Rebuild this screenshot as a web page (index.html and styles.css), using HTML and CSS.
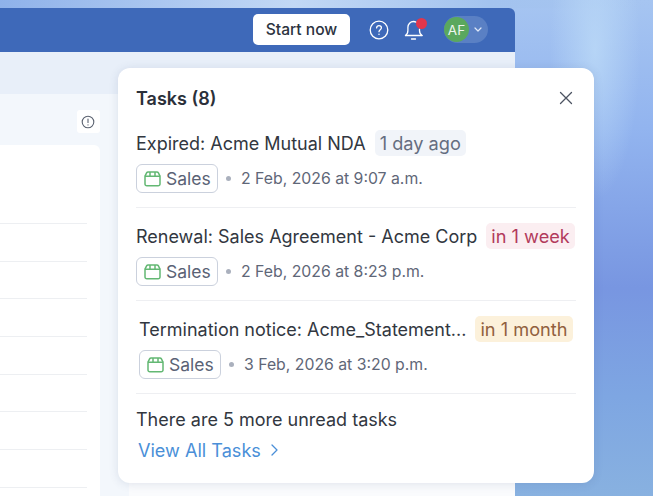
FILE: index.html
```html
<!DOCTYPE html>
<html lang="en">
<head>
    <meta charset="UTF-8">
    <meta name="viewport" content="width=device-width, initial-scale=1.0">
    <title>Tasks</title>
    <link rel="stylesheet" href="styles.css">
</head>
<body>

    <div class="app">
        <div class="topbar">
            <button class="start-btn">Start now</button>
            <svg class="help-icon" width="20" height="20" viewBox="0 0 20 20" fill="none" stroke="#fff" stroke-width="1.3" stroke-linecap="round">
                <circle cx="10" cy="10" r="8.8"/>
                <path d="M7.6 7.9c0-1.4 1.1-2.3 2.4-2.3s2.4.9 2.4 2.2c0 1.9-2.4 1.9-2.4 3.9"/>
                <path d="M10 14.2v.2"/>
            </svg>
            <div class="bell">
                <svg width="20" height="22" viewBox="0 0 20 22" fill="none" stroke="#fff" stroke-width="1.3" stroke-linecap="round" stroke-linejoin="round">
                    <path d="M1.5 16.5c1.6-1 2.4-2.6 2.4-5V8.2c0-3.1 2.500-5.700 5.600-5.700 1 0 2 .3 2.800.8"/>
                    <path d="M15.500 10v1.500c0 2.400.9 4 2.500 5"/>
                    <path d="M1.500 16.500H18"/>
                    <path d="M7.500 20h4"/>
                </svg>
                <span class="bell-dot"></span>
            </div>
            <div class="account">
                <span class="avatar">AF</span>
                <svg width="8" height="5" viewBox="0 0 8 5" fill="none" stroke="#dfe8f8" stroke-width="1.2" stroke-linecap="round" stroke-linejoin="round">
                    <path d="M1 1l3 3 3-3"/>
                </svg>
            </div>
        </div>
        <div class="subbar"></div>
        <div class="content">
            <div class="toolbar">
                <span class="info-btn">
                    <svg width="14" height="14" viewBox="0 0 14 14" fill="none" stroke="#5b6270" stroke-width="1.1" stroke-linecap="round">
                        <circle cx="7" cy="7" r="5.8"/>
                        <path d="M7 4v3.4"/>
                        <path d="M7 9.8v.1"/>
                    </svg>
                </span>
            </div>
            <div class="panels">
                <div class="list-card">
                    <div class="list-head"></div>
                    <div class="list-row"></div>
                    <div class="list-row"></div>
                    <div class="list-row"></div>
                    <div class="list-row"></div>
                    <div class="list-row"></div>
                    <div class="list-row"></div>
                    <div class="list-row"></div>
                    <div class="list-row"></div>
                </div>
                <div class="main-card"></div>
            </div>
        </div>
    </div>

    <div class="tasks-popover">
        <div class="tasks-header">
            <h2>Tasks (8)</h2>
            <svg width="14" height="14" viewBox="0 0 14 14" fill="none" stroke="#4c5361" stroke-width="1.3" stroke-linecap="round">
                <path d="M1.5 1.5l11 11M12.5 1.5l-11 11"/>
            </svg>
        </div>

        <div class="task">
            <div class="task-title">
                <span class="task-name">Expired: Acme Mutual NDA</span>
                <span class="badge badge-grey">1 day ago</span>
            </div>
            <div class="task-meta">
                <span class="chip">
                    <svg class="chip-icon" width="17" height="17" viewBox="0 0 17 17" fill="none" stroke="#63b873" stroke-width="1.5" stroke-linejoin="round">
                        <path d="M1 6.2V14a1.8 1.8 0 0 0 1.8 1.8h11.400A1.800 1.800 0 0 0 16 14V6.200z"/>
                        <path d="M1 6.200l1.600-3.300c.3-.6.8-1 1.500-1h8.800c.7 0 1.200.4 1.500 1L16 6.200"/>
                        <path d="M6 6.200V1.900M11 6.200V1.900"/>
                    </svg>
                    Sales
                </span>
                <span class="dot"></span>
                <span class="task-date">2 Feb, 2026 at 9:07 a.m.</span>
            </div>
        </div>

        <div class="task">
            <div class="task-title">
                <span class="task-name">Renewal: Sales Agreement - Acme Corp</span>
                <span class="badge badge-red">in 1 week</span>
            </div>
            <div class="task-meta">
                <span class="chip">
                    <svg class="chip-icon" width="17" height="17" viewBox="0 0 17 17" fill="none" stroke="#63b873" stroke-width="1.5" stroke-linejoin="round">
                        <path d="M1 6.200V14a1.800 1.800 0 0 0 1.800 1.800h11.400A1.800 1.800 0 0 0 16 14V6.200z"/>
                        <path d="M1 6.200l1.600-3.300c.3-.6.8-1 1.500-1h8.800c.7 0 1.200.4 1.500 1L16 6.200"/>
                        <path d="M6 6.200V1.900M11 6.200V1.900"/>
                    </svg>
                    Sales
                </span>
                <span class="dot"></span>
                <span class="task-date">2 Feb, 2026 at 8:23 p.m.</span>
            </div>
        </div>

        <div class="task task-shifted">
            <div class="task-title">
                <span class="task-name">Termination notice: Acme_Statement...</span>
                <span class="badge badge-amber">in 1 month</span>
            </div>
            <div class="task-meta">
                <span class="chip">
                    <svg class="chip-icon" width="17" height="17" viewBox="0 0 17 17" fill="none" stroke="#63b873" stroke-width="1.5" stroke-linejoin="round">
                        <path d="M1 6.200V14a1.800 1.800 0 0 0 1.800 1.800h11.400A1.800 1.800 0 0 0 16 14V6.200z"/>
                        <path d="M1 6.200l1.600-3.300c.3-.6.8-1 1.500-1h8.800c.7 0 1.200.4 1.500 1L16 6.200"/>
                        <path d="M6 6.200V1.900M11 6.200V1.900"/>
                    </svg>
                    Sales
                </span>
                <span class="dot"></span>
                <span class="task-date">3 Feb, 2026 at 3:20 p.m.</span>
            </div>
        </div>

        <div class="tasks-footer">
            <p>There are 5 more unread tasks</p>
            <a class="view-all" href="#">
                View All Tasks
                <svg width="7" height="12" viewBox="0 0 7 12" fill="none" stroke="#4a8fd8" stroke-width="1.3" stroke-linecap="round" stroke-linejoin="round">
                    <path d="M1 1l5 5-5 5"/>
                </svg>
            </a>
        </div>
    </div>

</body>
</html>
```

FILE: styles.css
```css
* {
    margin: 0;
    padding: 0;
    box-sizing: border-box;
}

body {
    width: 653px;
    height: 496px;
    overflow: hidden;
    position: relative;
    font-family: Inter, "Noto Sans", sans-serif;
    background:
        radial-gradient(ellipse 45px 150px at 595px 50px, rgba(190, 220, 248, 0.75) 0%, rgba(190, 220, 248, 0) 100%),
        linear-gradient(90deg, #8fb2ea 0%, #c2d8f5 45%, #a3c3ef 75%, rgba(163, 195, 239, 0) 100%) 0 0 / 100% 8px no-repeat,
        linear-gradient(180deg, #a6c5f1 0%, #92b4ef 26%, #7896e1 58%, #7ea6e2 80%, #88b1e0 100%);
}

.app {
    width: 515px;
    height: 488px;
    margin-top: 8px;
    display: flex;
    flex-direction: column;
    border-radius: 0 6px 0 0;
    overflow: hidden;
}

.topbar {
    height: 44px;
    flex-shrink: 0;
    background-color: #3e69b9;
    display: flex;
    align-items: center;
    justify-content: flex-end;
    padding: 0 27px 1px 0;
}

.start-btn {
    width: 97px;
    height: 31px;
    border: none;
    border-radius: 5px;
    background-color: #fff;
    color: #2c3340;
    font-family: inherit;
    font-size: 15.6px;
    font-weight: 500;
}

.help-icon {
    margin-left: 19px;
}

.bell {
    position: relative;
    width: 20px;
    height: 22px;
    margin-left: 15px;
}

.bell svg {
    display: block;
}

.bell-dot {
    position: absolute;
    top: -1px;
    right: -3px;
    width: 11px;
    height: 11px;
    border-radius: 50%;
    background-color: #e2364c;
}

.account {
    width: 44px;
    height: 27px;
    margin-left: 20px;
    border-radius: 14px;
    background-color: #5a80c4;
    display: flex;
    align-items: center;
    gap: 5px;
}

.avatar {
    width: 25px;
    height: 25px;
    border-radius: 50%;
    background-color: #5aa85e;
    color: #eef6ee;
    font-size: 13.5px;
    display: flex;
    align-items: center;
    justify-content: center;
}

.subbar {
    height: 42px;
    flex-shrink: 0;
    background-color: #e8eff9;
}

.content {
    flex: 1;
    background-color: #f3f7fc;
    display: flex;
    flex-direction: column;
}

.toolbar {
    height: 51px;
    flex-shrink: 0;
    padding: 16px 0 0 77px;
}

.info-btn {
    width: 23px;
    height: 23px;
    padding-right: 1px;
    border-radius: 3px;
    background-color: #fff;
    display: flex;
    align-items: center;
    justify-content: center;
}

.panels {
    flex: 1;
    display: flex;
}

.list-card {
    width: 100px;
    padding-right: 13px;
    background-color: #fff;
    border-radius: 0 6px 0 0;
}

.list-head {
    height: 79px;
    border-bottom: 1px solid #edeff2;
}

.list-row {
    height: 37.7px;
    border-bottom: 1px solid #edeff2;
}

.main-card {
    width: 386px;
    margin-left: 29px;
    background-color: #fafbfd;
}

.tasks-popover {
    position: absolute;
    left: 118px;
    top: 68px;
    width: 476px;
    height: 415px;
    padding: 0 18px;
    background-color: #fff;
    border-radius: 12px;
    box-shadow: 0 1px 10px rgba(60, 80, 120, 0.14);
}

.tasks-header {
    height: 60px;
    padding-right: 3px;
    display: flex;
    align-items: center;
    justify-content: space-between;
}

.tasks-header h2 {
    font-size: 18px;
    font-weight: 600;
    color: #2b303a;
}

.task {
    height: 80px;
    margin-bottom: 13px;
    border-bottom: 1.5px solid #eeeff2;
}

.task-title {
    height: 30px;
    display: flex;
    align-items: center;
    gap: 9px;
}

.task-name {
    font-size: 18px;
    color: #32373f;
    white-space: nowrap;
}

.badge {
    height: 26px;
    padding: 0 5px;
    border-radius: 5px;
    font-size: 18.2px;
    display: flex;
    align-items: center;
    white-space: nowrap;
}

.badge-grey {
    background-color: #f1f4f9;
    color: #656d80;
}

.badge-red {
    background-color: #fbeef1;
    color: #b23a5c;
}

.badge-amber {
    background-color: #fcf1db;
    color: #91603e;
}

.task-meta {
    height: 29px;
    margin-top: 6px;
    display: flex;
    align-items: center;
}

.task-shifted .task-title,
.task-shifted .task-meta {
    padding-left: 3px;
}

.chip {
    width: 82px;
    height: 29px;
    padding-left: 7px;
    border: 1px solid #cbd1dd;
    border-radius: 6px;
    color: #5a6275;
    font-size: 17.5px;
    display: flex;
    align-items: center;
    gap: 5px;
}

.chip-icon {
    flex-shrink: 0;
}

.dot {
    width: 5px;
    height: 5px;
    margin: 0 10px 0 8px;
    border-radius: 50%;
    background-color: #aab0bd;
}

.task-date {
    font-size: 15.8px;
    color: #5f6778;
    white-space: nowrap;
}

.tasks-footer p {
    height: 26px;
    font-size: 18px;
    line-height: 26px;
    color: #32373f;
}

.view-all {
    margin-top: 4px;
    padding-left: 2px;
    display: flex;
    align-items: center;
    gap: 10px;
    font-size: 18.1px;
    line-height: 26px;
    color: #4a8fd8;
    text-decoration: none;
}
```
